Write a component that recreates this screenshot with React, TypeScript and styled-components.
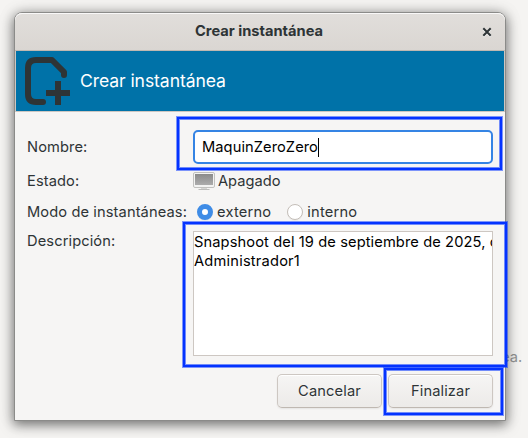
import React from 'react';
import styled, { createGlobalStyle } from 'styled-components';

const GlobalStyle = createGlobalStyle`
  * { box-sizing: border-box; }
  body {
    margin: 0;
    background: #f5f4f2;
    font-family: Inter, sans-serif;
    font-size: 14.67px;
    line-height: 19px;
    color: #2e3436;
    overflow: hidden;
  }
`;

const Desktop = styled.div`
  position: relative;
  width: 528px;
  height: 438px;
  padding: 12px 22px 0 14px;
  overflow: hidden;
`;

const Background = styled.span`
  position: absolute;
  left: 501px;
  top: 348px;
  color: #929595;
`;

const Dialog = styled.section`
  position: relative;
  width: 492px;
  height: 409px;
  display: flex;
  flex-direction: column;
  border: 1px solid #8b8b89;
  border-radius: 8px 8px 0 0;
  background: #f6f5f4;
  box-shadow: 0 3px 12px 1px rgba(0, 0, 0, 0.5), 0 0 20px rgba(0, 0, 0, 0.08);
`;

const TitleBar = styled.header`
  height: 38px;
  flex: none;
  display: grid;
  grid-template-columns: 35px 1fr 37px;
  align-items: center;
  border-bottom: 1px solid #bfb8b1;
  border-radius: 7px 7px 0 0;
  background: linear-gradient(to top, #dad6d2, #e1dedb);
  box-shadow: inset 0 1px #f9f8f8;
`;

const Title = styled.h1`
  grid-column: 2;
  margin: 0;
  padding-bottom: 1px;
  text-align: center;
  font-size: 14.67px;
  font-weight: 700;
  line-height: 19px;
`;

const CloseButton = styled.button`
  display: flex;
  align-items: center;
  justify-content: center;
  width: 37px;
  height: 36px;
  padding: 0;
  border: 0;
  background: none;
  color: #2e3436;
  filter: drop-shadow(0 1px rgba(255, 255, 255, 0.77));
`;

const Banner = styled.div`
  height: 61px;
  flex: none;
  display: flex;
  align-items: center;
  gap: 9px;
  padding-left: 9px;
  border: 1px solid #cdc7c2;
  border-top-width: 0;
  background: #0072a8;
  color: #fff;
  font-size: 17.6px;
  line-height: 24px;
  letter-spacing: -0.1px;
`;

const Form = styled.div`
  display: grid;
  grid-template-columns: 166px 300px;
  grid-template-rows: 34px 34px 28px 33px 91px;
  padding: 18px 0 0 12px;
`;

const Label = styled.label`
  align-self: center;
  white-space: nowrap;
  letter-spacing: 0.1px;
`;

const NameEntry = styled.div`
  display: flex;
  align-items: center;
  padding-left: 7px;
  border: 2px solid #3584e4;
  border-radius: 5px;
  background: #fff;
  color: #000;
  letter-spacing: 0.07px;
`;

const Caret = styled.span`
  width: 1px;
  height: 19px;
  background: #000;
`;

const Status = styled.div`
  display: flex;
  align-items: center;
  gap: 3px;
`;

const RadioGroup = styled.div`
  display: flex;
  align-items: center;
  gap: 16px;
  letter-spacing: 0.2px;
`;

const RadioOption = styled.span`
  display: flex;
  align-items: center;
  gap: 4px;
  padding-left: 4px;
  & + & { padding-left: 0; }
`;

const Radio = styled.span<{ $checked?: boolean }>`
  width: 16px;
  height: 16px;
  border-radius: 50%;
  border: ${({ $checked }) => ($checked ? '5px solid #3f8ce6' : '1px solid #c4beb8')};
  background: #fff;
  box-shadow: 0 1px rgba(0, 0, 0, 0.04);
`;

const DescriptionLabel = styled(Label)`
  align-self: start;
  padding-top: 6px;
`;

const Description = styled.div`
  grid-row: 4 / 6;
  grid-column: 2;
  height: 125px;
  margin-top: 5px;
  border: 1px solid #cdc7c2;
  background: #fff;
  color: #000;
  overflow: hidden;
`;

const DescriptionLine = styled.div<{ $spacing: number }>`
  position: relative;
  top: 1px;
  white-space: nowrap;
  letter-spacing: ${({ $spacing }) => $spacing}px;
`;

const Actions = styled.footer`
  display: flex;
  justify-content: flex-end;
  gap: 6px;
  padding: 24px 12px 0 0;
`;

const Button = styled.button`
  width: 105px;
  height: 34px;
  padding: 0;
  border: 1px solid #cdc7c2;
  border-bottom-color: #bfb8b1;
  border-radius: 5px;
  background: linear-gradient(to top, #edebe9 2px, #f6f5f4);
  box-shadow: inset 0 1px #fff, 0 1px 2px rgba(0, 0, 0, 0.07);
  color: #2e3436;
  font: inherit;
  letter-spacing: 0.12px;
  text-shadow: 0 1px rgba(255, 255, 255, 0.77);
`;

const Highlight = styled.div<{ $x: number; $y: number; $w: number; $h: number }>`
  position: absolute;
  left: ${({ $x }) => $x}px;
  top: ${({ $y }) => $y}px;
  width: ${({ $w }) => $w}px;
  height: ${({ $h }) => $h}px;
  border: 2px solid #0433ff;
  box-shadow: 0 0 0 1px rgba(4, 51, 255, 0.5), inset 0 0 0 1px rgba(4, 51, 255, 0.55);
  pointer-events: none;
`;

function SnapshotIcon() {
  return (
    <svg width="46" height="48" viewBox="0 0 46 48" fill="none" stroke="#2e3436" strokeWidth="6">
      <path d="M18 45H11Q3 45 3 37V11Q3 3 11 3H27L39 15V18" strokeLinecap="round" strokeLinejoin="round" />
      <path d="M33 24V48M21 36H45" />
    </svg>
  );
}

function MonitorIcon() {
  return (
    <svg width="22" height="20" viewBox="0 0 22 20">
      <defs>
        <linearGradient id="screen" x2="0" y2="1">
          <stop stopColor="#8b8b8b" />
          <stop offset="1" stopColor="#acacac" />
        </linearGradient>
      </defs>
      <path d="M8 16H14V18H8Z" fill="#d6d6d4" />
      <path d="M5.5 18.5H16.5" stroke="#bdbdbb" />
      <rect x=".5" y="1.5" width="21" height="15" rx="1.5" fill="#f3f3f2" stroke="#c1c1bf" />
      <rect x="2" y="3" width="18" height="11" fill="url(#screen)" />
    </svg>
  );
}

export default function App() {
  return (
    <>
      <GlobalStyle />
      <Desktop>
        <Background>ea.</Background>
        <Dialog>
          <TitleBar>
            <Title>Crear instantánea</Title>
            <CloseButton aria-label="Cerrar">
              <svg width="10" height="10" viewBox="0 0 10 10" stroke="currentColor" strokeWidth="2">
                <path d="M1.3 1.3L8.7 8.7M8.7 1.3L1.3 8.7" />
              </svg>
            </CloseButton>
          </TitleBar>
          <Banner>
            <SnapshotIcon />
            <span>Crear instantánea</span>
          </Banner>
          <Form>
            <Label>Nombre:</Label>
            <NameEntry>
              <span>MaquinZeroZero</span>
              <Caret />
            </NameEntry>
            <Label>Estado:</Label>
            <Status>
              <MonitorIcon />
              <span>Apagado</span>
            </Status>
            <Label>Modo de instantáneas:</Label>
            <RadioGroup>
              <RadioOption><Radio $checked />externo</RadioOption>
              <RadioOption><Radio />interno</RadioOption>
            </RadioGroup>
            <DescriptionLabel>Descripción:</DescriptionLabel>
            <Description>
              <DescriptionLine $spacing={0.1}>Snapshoot del 19 de septiembre de 2025, de</DescriptionLine>
              <DescriptionLine $spacing={0.2}>Administrador1</DescriptionLine>
            </Description>
          </Form>
          <Actions>
            <Button>Cancelar</Button>
            <Button>Finalizar</Button>
          </Actions>
        </Dialog>
        <Highlight $x={177} $y={117} $w={325} $h={53} />
        <Highlight $x={183} $y={222} $w={324} $h={145} />
        <Highlight $x={384} $y={368} $w={119} $h={47} />
      </Desktop>
    </>
  );
}
